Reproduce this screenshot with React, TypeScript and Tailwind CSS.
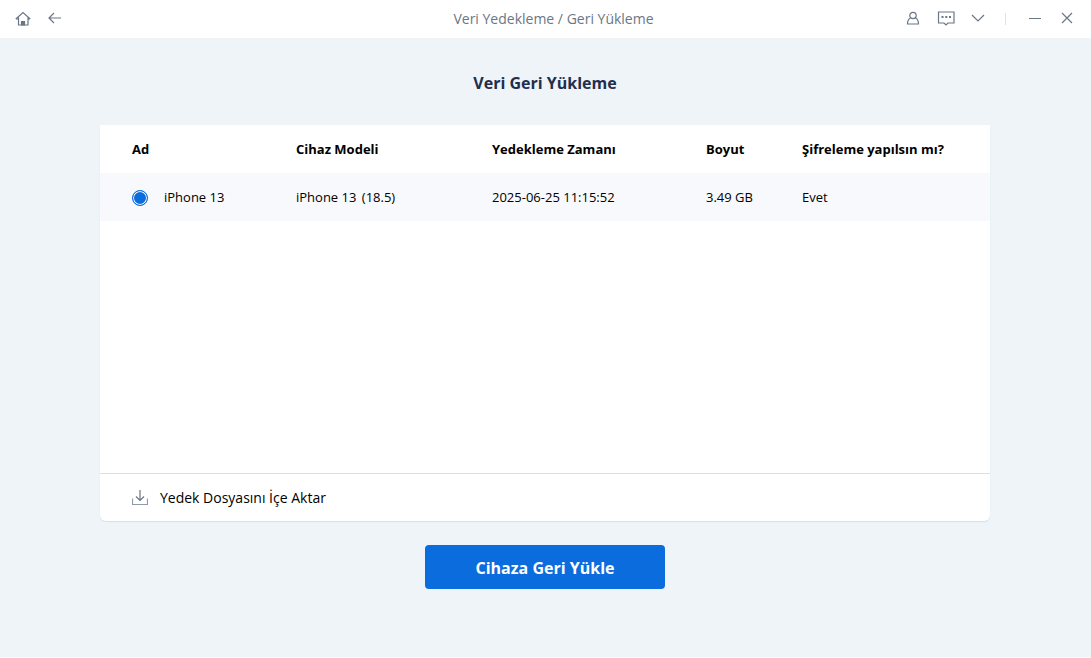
import { useState } from 'react';

type Backup = {
  id: string;
  name: string;
  model: string;
  version: string;
  time: string;
  size: string;
  encrypted: string;
};

const backups: Backup[] = [
  {
    id: 'iphone-13',
    name: 'iPhone 13',
    model: 'iPhone 13',
    version: '(18.5)',
    time: '2025-06-25 11:15:52',
    size: '3.49 GB',
    encrypted: 'Evet',
  },
];

function TitleBar() {
  return (
    <header className="grid h-[38px] grid-cols-[1fr_auto_1fr] items-center bg-white text-[#6b7686]">
      <nav className="flex items-center gap-4 pl-[15px]">
        <button type="button" aria-label="Ana sayfa">
          <svg width="16" height="16" viewBox="0 0 16 16" fill="none" stroke="currentColor" strokeWidth="1.2">
            <path d="M.8 8 8 1.5 15.2 8M3.5 6.5v7.5h9.500V6.500M3.500 8H1M12.500 8H15" />
            <path d="M6.500 10.500h3V14h-3z" fill="currentColor" />
          </svg>
        </button>
        <button type="button" aria-label="Geri">
          <svg width="16" height="16" viewBox="0 0 16 16" fill="none" stroke="currentColor" strokeWidth="1.2">
            <path d="M14 7H2M7 2 2 7l5 5" />
          </svg>
        </button>
      </nav>
      <h1 className="pl-4 text-sm">Veri Yedekleme / Geri Yükleme</h1>
      <div className="flex items-center justify-end pr-[17px]">
        <button type="button" aria-label="Hesap" className="mr-4">
          <svg width="16" height="16" viewBox="0 0 16 16" fill="none" stroke="currentColor" strokeWidth="1.2">
            <circle cx="8" cy="4.500" r="3.200" />
            <path d="M5.500 7C3.500 8 2.500 10 2.500 13h11c0-3-1-5-3-6" />
          </svg>
        </button>
        <button type="button" aria-label="Geri bildirim" className="mr-4">
          <svg width="18" height="16" viewBox="0 0 18 16" fill="none" stroke="currentColor" strokeWidth="1.2">
            <path d="M1.500 1h15.500v11h-6L9 14l-2-2H1.500z" />
            <path d="M4.500 5h2v2h-2zM8.300 5h2v2h-2zM12 5h2v2h-2z" fill="currentColor" stroke="none" />
          </svg>
        </button>
        <button type="button" aria-label="Menü">
          <svg width="14" height="16" viewBox="0 0 14 16" fill="none" stroke="currentColor" strokeWidth="1.2">
            <path d="m1 4 6 6 6-6" />
          </svg>
        </button>
        <span className="mr-[22px] ml-5 h-3 w-px bg-[#e0e2e6]" />
        <button type="button" aria-label="Küçült" className="mr-[18px]">
          <svg width="14" height="16" viewBox="0 0 14 16" fill="none" stroke="currentColor">
            <path d="M1 7.500h12" />
          </svg>
        </button>
        <button type="button" aria-label="Kapat">
          <svg width="14" height="16" viewBox="0 0 14 16" fill="none" stroke="currentColor" strokeWidth="1.2">
            <path d="m2 2 10 10M12 2 2 12" />
          </svg>
        </button>
      </div>
    </header>
  );
}

function BackupTable() {
  const [selected, setSelected] = useState(backups[0].id);

  return (
    <table className="w-full table-fixed text-left text-[13px] text-black">
      <colgroup>
        <col className="w-[196px]" />
        <col className="w-[196px]" />
        <col className="w-[214px]" />
        <col className="w-24" />
        <col />
      </colgroup>
      <thead>
        <tr className="h-12 whitespace-nowrap *:pt-0.5">
          <th className="pl-8 font-bold">Ad</th>
          <th className="font-bold">Cihaz Modeli</th>
          <th className="font-bold">Yedekleme Zamanı</th>
          <th className="font-bold">Boyut</th>
          <th className="font-bold">Şifreleme yapılsın mı?</th>
        </tr>
      </thead>
      <tbody>
        {backups.map((backup) => (
          <tr key={backup.id} className="h-12 bg-[#f7f9fd] *:pt-0.5">
            <td className="pl-8">
              <label className="flex items-center gap-4">
                <input
                  type="radio"
                  name="backup"
                  checked={selected === backup.id}
                  onChange={() => setSelected(backup.id)}
                  className="size-4 appearance-none rounded-full border border-[#0b6cde] bg-white checked:bg-[#0b6cde] checked:shadow-[inset_0_0_0_1px_#fff]"
                />
                {backup.name}
              </label>
            </td>
            <td>
              {backup.model} <span className="ml-0.5">{backup.version}</span>
            </td>
            <td>{backup.time}</td>
            <td>{backup.size}</td>
            <td>{backup.encrypted}</td>
          </tr>
        ))}
      </tbody>
    </table>
  );
}

export default function App() {
  return (
    <div className="flex min-h-screen flex-col border-b border-[#f8fafc] bg-[#eef4f8] font-['Open_Sans','Noto_Sans',sans-serif]">
      <TitleBar />
      <main className="flex flex-1 flex-col items-center pr-[101px] pb-[68px] pl-[100px]">
        <h2 className="mt-8 text-base leading-[26px] font-bold text-[#1f2f4d]">Veri Geri Yükleme</h2>
        <section className="mt-[29px] flex w-full flex-1 flex-col rounded-b-md bg-white shadow-[0_1px_1px_#d5e0ec]">
          <div className="flex-1">
            <BackupTable />
          </div>
          <div className="border-t border-[#d5e0eb]">
            <button type="button" className="flex h-[47px] items-center gap-3 pl-8 text-sm text-black">
              <svg width="16" height="16" viewBox="0 0 16 16" fill="none" className="text-[#8f9bac]" stroke="currentColor" strokeWidth="1.2">
                <path d="M.5 8.500v6h15v-6" />
                <path d="M8 0v10.500M4 6.500l4 4 4-4" stroke="#6b7686" />
              </svg>
              Yedek Dosyasını İçe Aktar
            </button>
          </div>
        </section>
        <button type="button" className="mt-6 h-11 w-60 rounded bg-[#0b6cde] pt-0.5 text-base font-bold text-white">
          Cihaza Geri Yükle
        </button>
      </main>
    </div>
  );
}
